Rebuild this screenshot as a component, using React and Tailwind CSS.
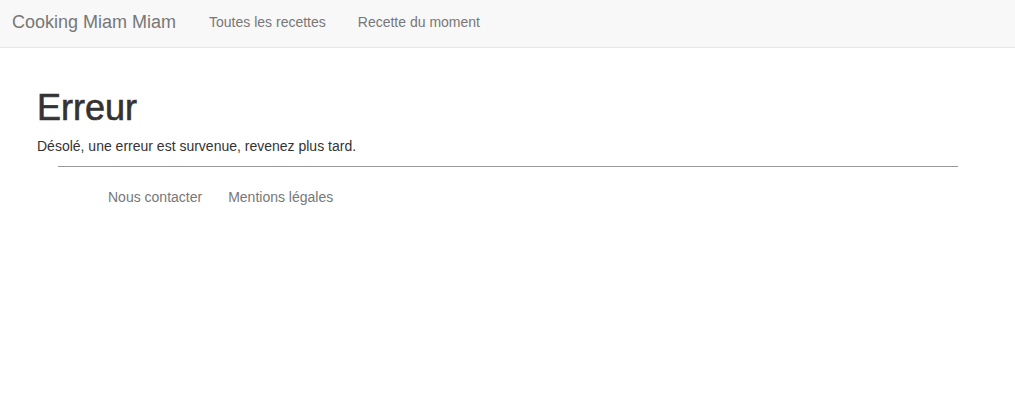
export default function App() {
  return (
    <div className="min-h-[414px] bg-white font-['Liberation_Sans',Arial,sans-serif] text-[#333]">
      <nav className="h-[48px] bg-[#f8f8f8] border-b border-[#e7e7e7] flex items-start">
        <a className="pt-[12px] pl-[12px] text-[18px] leading-[20px] text-[#777]">Cooking Miam Miam</a>
        <ul className="flex ml-[18px]">
          <li className="pt-[12px] pl-[15px] pr-[17px] text-[14px] leading-[20px] text-[#777]">Toutes les recettes</li>
          <li className="pt-[12px] px-[15px] text-[14px] leading-[20px] text-[#777]">Recette du moment</li>
        </ul>
      </nav>
      <main className="pl-[37px]">
        <h1 className="mt-[40px] text-[36px] leading-[40px] [-webkit-text-stroke:0.6px_#333]">Erreur</h1>
        <p className="mt-[8px] text-[14px] leading-[20px]">Désolé, une erreur est survenue, revenez plus tard.</p>
      </main>
      <footer className="mt-[10px] ml-[58px] w-[900px]">
        <hr className="border-0 border-t border-[#999]" />
        <ul className="flex mt-[20px] pl-[50px] text-[14px] leading-[20px] text-[#777]">
          <li>Nous contacter</li>
          <li className="ml-[26px]">Mentions légales</li>
        </ul>
      </footer>
    </div>
  );
}
